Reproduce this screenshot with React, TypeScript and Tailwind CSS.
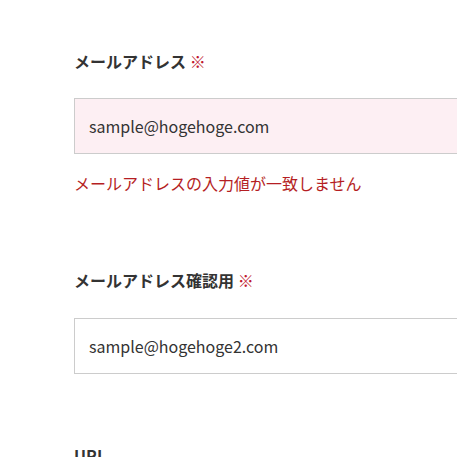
import React from "react";

const font = { fontFamily: '"Noto Sans CJK JP", "Noto Sans", sans-serif' };

export default function App() {
  return (
    <div
      className="w-[457px] h-[457px] overflow-hidden bg-white pl-[74px] pt-[49px] text-[#333333]"
      style={font}
    >
      <div className="w-[520px]">
        <div className="text-[16px] leading-[24px] font-bold">
          メールアドレス <span className="text-[#c0172e] font-normal">※</span>
        </div>
        <input
          readOnly
          value="sample@hogehoge.com"
          className="mt-[25px] block w-full h-[56px] border border-[#cccccc] bg-[#fdeff3] pl-[14px] text-[16px] text-[#333333] outline-none"
          style={font}
        />
        <div className="mt-[17px] text-[16px] leading-[24px] text-[#b51e23]">
          メールアドレスの入力値が一致しません
        </div>

        <div className="mt-[73px] text-[16px] leading-[24px] font-bold">
          メールアドレス確認用 <span className="text-[#c0172e] font-normal">※</span>
        </div>
        <input
          readOnly
          value="sample@hogehoge2.com"
          className="mt-[26px] block w-full h-[56px] border border-[#cccccc] bg-white pl-[14px] text-[16px] text-[#333333] outline-none"
          style={font}
        />

        <div className="mt-[69px] text-[16px] leading-[24px] font-bold">URL</div>
      </div>
    </div>
  );
}
